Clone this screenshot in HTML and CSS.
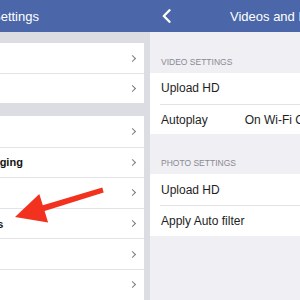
FILE: index.html
```html
<!DOCTYPE html>
<html lang="en">
  <head>
    <meta charset="UTF-8" />
    <meta name="viewport" content="width=device-width, initial-scale=1.0" />
    <title>Settings - Videos and Photos</title>
    <link rel="stylesheet" href="styles.css">
  </head>
  <body>
    <div class="app">
      <section class="master">
        <div class="master-inner">
          <header class="navbar">
            <span class="nav-title">Settings</span>
          </header>

          <ul class="group">
            <li class="row"><span class="row-label">Feed</span><span class="chevron"></span></li>
            <li class="row"><span class="row-label">Login</span><span class="chevron"></span></li>
          </ul>

          <ul class="group tall">
            <li class="row"><span class="row-label">Help</span><span class="chevron"></span></li>
            <li class="row"><span class="row-label">Messaging</span><span class="chevron"></span></li>
            <li class="row"><span class="row-label">Chat</span><span class="chevron"></span></li>
            <li class="row"><span class="row-label">Photos</span><span class="chevron"></span></li>
            <li class="row"><span class="row-label">About</span><span class="chevron"></span></li>
            <li class="row"><span class="row-label">Feed</span><span class="chevron"></span></li>
          </ul>
        </div>
      </section>

      <section class="detail">
        <header class="navbar">
          <svg class="back" width="9" height="14" viewBox="0 0 9 14">
            <path d="M7.5 1.2L1.8 7l5.7 5.8" fill="none" stroke="#fff" stroke-width="2.3" stroke-linecap="round" stroke-linejoin="round"/>
          </svg>
          <span class="nav-title">Videos and Photos</span>
        </header>

        <div class="section-title">Video Settings</div>
        <ul class="list">
          <li class="item">Upload HD</li>
          <li class="item">Autoplay<span class="item-value">On Wi-Fi Connections</span></li>
        </ul>

        <div class="section-title second">Photo Settings</div>
        <ul class="list">
          <li class="item">Upload HD</li>
          <li class="item">Apply Auto filter</li>
        </ul>
      </section>

      <svg class="arrow" width="300" height="300" viewBox="0 0 300 300">
        <path d="M15 217 L39.3 193.9 L42.8 205.3 L102.3 187.6 L103.7 192.4 L44.6 211.1 L48.1 222.5 Z" fill="#f2321f"/>
      </svg>
    </div>
  </body>
</html>
```

FILE: styles.css
```css
* {
  margin: 0;
  padding: 0;
  box-sizing: border-box;
}

body {
  font-family: "Liberation Sans", Arial, sans-serif;
  background: #efeff4;
  width: 300px;
  height: 300px;
  overflow: hidden;
}

ul {
  list-style: none;
}

.app {
  position: relative;
  display: flex;
  height: 300px;
}

.navbar {
  height: 32px;
  background: #4b67a9;
  color: #ffffff;
  display: flex;
  align-items: center;
  font-size: 13px;
  white-space: nowrap;
  overflow: hidden;
}

/* left pane, cropped on its left side */
.master {
  width: 150px;
  flex-shrink: 0;
  background: #dcdde2;
  overflow: hidden;
}

.master-inner {
  width: 198px;
  margin-left: -48px;
}

.master .navbar {
  padding-left: 40px;
}

.group {
  background: #ffffff;
  margin: 11px 6px 13px 0;
}

.row {
  height: 30px;
  display: flex;
  align-items: center;
  justify-content: space-between;
  padding: 0 7px 0 14px;
  font-size: 11px;
  font-weight: 700;
  color: #141414;
}

.row + .row {
  border-top: 1px solid #e4e4e8;
}

.group.tall {
  margin-top: 0;
}

.group.tall .row {
  height: 30.6px;
}

.chevron {
  width: 5px;
  height: 5px;
  border-top: 1.6px solid #7c7c84;
  border-right: 1.6px solid #7c7c84;
  transform: rotate(45deg);
  margin-right: 2px;
}

/* right pane */
.detail {
  flex: 1;
  min-width: 0;
  overflow: hidden;
}

.detail .navbar {
  padding-left: 12px;
}

.back {
  flex-shrink: 0;
}

.detail .nav-title {
  margin-left: 59px;
}

.section-title {
  height: 41px;
  display: flex;
  align-items: flex-end;
  padding: 0 0 6px 11px;
  font-size: 8.5px;
  line-height: 10px;
  text-transform: uppercase;
  color: #8a8a90;
  white-space: nowrap;
}

.section-title.second {
  height: 40px;
}

.list {
  background: #ffffff;
}

.item {
  height: 30.7px;
  display: flex;
  align-items: center;
  padding-left: 11px;
  font-size: 12px;
  color: #1e1e1e;
  white-space: nowrap;
}

.item + .item {
  border-top: 1px solid #e2e2e6;
  margin-left: 10px;
  padding-left: 1px;
}

.item-value {
  margin-left: 37px;
}

.arrow {
  position: absolute;
  left: 0;
  top: 0;
  pointer-events: none;
}
```
